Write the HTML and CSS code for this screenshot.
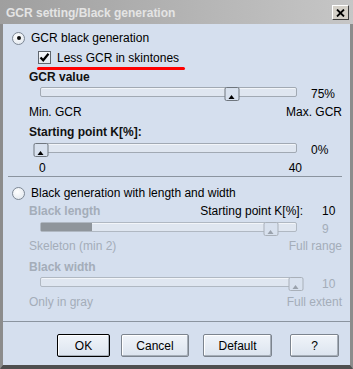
FILE: index.html
```html
<!DOCTYPE html>
<html lang="en">

<head>
  <meta charset="UTF-8">
  <meta name="viewport" content="width=device-width, initial-scale=1.0">
  <title>GCR setting/Black generation</title>
  <link rel="stylesheet" href="styles.css">
</head>

<body>
  <div class="window">
    <div class="titlebar">
      <span class="title">GCR setting/Black generation</span>
      <span class="close-btn">
        <svg width="9" height="8" viewBox="0 0 9 8">
          <path d="M1 0.5 L8 7.5 M8 0.5 L1 7.5" stroke="#000" stroke-width="1.8" fill="none" />
        </svg>
      </span>
    </div>

    <div class="dialog-body">
      <!-- GCR section -->
      <div class="option option-first">
        <span class="radio checked"></span>
        GCR black generation
      </div>
      <div class="check-row">
        <span class="checkbox">
          <svg width="11" height="11" viewBox="0 0 11 11">
            <path d="M1.5 5.5 L4.2 8.3 L9.5 1.8" stroke="#000" stroke-width="2.2" fill="none" />
          </svg>
        </span>
        Less GCR in skintones
      </div>
      <div class="red-mark"></div>

      <div class="label label-short">GCR value</div>
      <div class="slider-row">
        <div class="track">
          <span class="thumb" style="left: 75%"></span>
        </div>
        <span class="value">75%</span>
      </div>
      <div class="range-row range-row-tall">
        <span>Min. GCR</span>
        <span>Max. GCR</span>
      </div>

      <div class="label label-mid">Starting point K[%]:</div>
      <div class="slider-row">
        <div class="track">
          <span class="thumb" style="left: 0%"></span>
        </div>
        <span class="value">0%</span>
      </div>
      <div class="scale">
        <span>0</span>
        <span>40</span>
      </div>

      <div class="separator"></div>

      <!-- length and width section -->
      <div class="option option-second">
        <span class="radio"></span>
        Black generation with length and width
      </div>
      <div class="length-row">
        <span class="label-inline disabled">Black length</span>
        <span class="start-label">Starting point K[%]:</span>
        <span class="value value-narrow">10</span>
      </div>
      <div class="slider-row disabled">
        <div class="track">
          <span class="track-fill" style="width: 20%"></span>
          <span class="thumb" style="left: 90%"></span>
        </div>
        <span class="value value-narrow">9</span>
      </div>
      <div class="range-row range-row-mid disabled">
        <span>Skeleton (min 2)</span>
        <span>Full range</span>
      </div>

      <div class="label label-width disabled">Black width</div>
      <div class="slider-row disabled">
        <div class="track">
          <span class="thumb" style="left: 100%"></span>
        </div>
        <span class="value value-narrow">10</span>
      </div>
      <div class="range-row range-row-tall disabled">
        <span>Only in gray</span>
        <span>Full extent</span>
      </div>

      <div class="separator separator-full"></div>

      <div class="buttons">
        <button class="btn btn-ok">OK</button>
        <button class="btn btn-cancel">Cancel</button>
        <button class="btn btn-default">Default</button>
        <button class="btn btn-help">?</button>
      </div>
    </div>
  </div>
</body>

</html>
```

FILE: styles.css
```css
body {
  margin: 0;
  font-family: "Liberation Sans", Arial, sans-serif;
  font-size: 12px;
  color: #000;
}

.window {
  width: 353px;
  height: 369px;
  display: flex;
  flex-direction: column;
  background: #d5dfee;
  overflow: hidden;
}

.titlebar {
  flex: none;
  height: 24px;
  box-sizing: border-box;
  padding: 1px 4px 0 6px;
  display: flex;
  align-items: center;
  justify-content: space-between;
  background: linear-gradient(to right, #9f9f9f, #c6c6c6);
}

.title {
  color: #e4e4e4;
  font-weight: bold;
}

.close-btn {
  width: 17px;
  height: 15px;
  box-sizing: border-box;
  display: flex;
  align-items: center;
  justify-content: center;
  background: #d4d0c8;
  border: 1px solid;
  border-color: #fff #404040 #404040 #fff;
}

.dialog-body {
  flex: 1;
  border: 3px solid #8c8c8c;
  border-top: 0;
  border-bottom: 4px solid #4f4f4f;
}

/* radio and checkbox rows */
.option {
  display: flex;
  align-items: center;
  height: 20px;
  padding-left: 9px;
}

.option-first {
  margin-top: 4px;
}

.option-second {
  margin-top: 6px;
}

.radio {
  width: 13px;
  height: 13px;
  box-sizing: border-box;
  margin-right: 6px;
  border: 1px solid #7d8794;
  border-radius: 50%;
  background: radial-gradient(circle at 40% 35%, #fff, #dde4ec);
  display: flex;
  align-items: center;
  justify-content: center;
}

.radio.checked::after {
  content: '';
  width: 4px;
  height: 4px;
  border-radius: 50%;
  background: #111;
}

.check-row {
  display: flex;
  align-items: center;
  height: 19px;
  padding-left: 35px;
}

.checkbox {
  width: 13px;
  height: 13px;
  box-sizing: border-box;
  margin-right: 6px;
  border: 1px solid #5f666e;
  background: linear-gradient(#f6f8fb, #e4e9ef);
  display: flex;
  align-items: center;
  justify-content: center;
}

.red-mark {
  height: 3px;
  width: 148px;
  margin-left: 34px;
  border-radius: 2px;
  background: #f00;
}

/* labels */
.label {
  padding-left: 26px;
  font-weight: bold;
  color: #111;
}

.label-short {
  height: 15px;
  line-height: 15px;
}

.label-mid {
  height: 17px;
  line-height: 17px;
}

.label-width {
  height: 15px;
  line-height: 15px;
  padding-top: 3px;
}

.disabled,
.disabled .value {
  color: #a4adb9;
}

/* sliders */
.slider-row {
  display: flex;
  height: 16px;
  padding-left: 37px;
  padding-right: 8px;
}

.track {
  position: relative;
  width: 257px;
  height: 10px;
  margin-top: 2px;
  box-sizing: border-box;
  border: 1px solid #a1a9b3;
  border-radius: 2px;
  background: #dfe6f0;
  box-shadow: inset 0 1px 0 #f2f5f9;
}

.disabled .track {
  border-color: #b0b8c2;
}

.track-fill {
  display: block;
  height: 100%;
  background: #8f959b;
}

.thumb {
  position: absolute;
  top: -1px;
  width: 15px;
  height: 14px;
  box-sizing: border-box;
  transform: translateX(-50%);
  border: 1px solid #6f767e;
  border-radius: 2px;
  background: #d8e1ee;
}

.thumb::after {
  content: '';
  position: absolute;
  left: 3px;
  bottom: 1px;
  border-left: 3.5px solid transparent;
  border-right: 3.5px solid transparent;
  border-bottom: 4px solid #000;
}

.disabled .thumb {
  border-color: #a9b0b9;
}

.disabled .thumb::after {
  border-bottom-color: #9aa2ac;
}

.value {
  margin-left: auto;
  width: 31px;
  padding-top: 2px;
  line-height: 15px;
}

.value-narrow {
  width: 20px;
}

.range-row {
  display: flex;
  justify-content: space-between;
  padding: 0 8px 0 26px;
}

.range-row-tall {
  height: 23px;
  line-height: 23px;
}

.range-row-mid {
  height: 21px;
  line-height: 21px;
}

.scale {
  display: flex;
  justify-content: space-between;
  width: 263px;
  height: 15px;
  margin: 4px 0 0 36px;
  line-height: 15px;
}

.length-row {
  display: flex;
  height: 17px;
  line-height: 17px;
  padding: 0 8px 0 26px;
}

.label-inline {
  flex: 1;
  font-weight: bold;
}

.start-label {
  margin-right: 19px;
}

.length-row .value {
  padding-top: 0;
  line-height: 17px;
}

.separator {
  height: 1px;
  margin: 0 8px 0 5px;
  background: #8b949f;
}

.separator-full {
  margin: 7px 0 0 0;
}

/* buttons */
.buttons {
  display: flex;
  margin-top: 12px;
  padding-left: 54px;
}

.btn {
  height: 23px;
  box-sizing: border-box;
  padding: 0;
  font-family: inherit;
  font-size: 12px;
  color: #000;
  border: 1px solid #7c848e;
  border-radius: 2px;
  background: linear-gradient(#f0f4f9, #dce4ef);
  box-shadow: inset -1px -1px 0 #a6aeb8, inset 1px 1px 0 #fff;
}

.btn-ok {
  width: 53px;
  border-color: #000;
}

.btn-cancel {
  width: 68px;
  margin-left: 11px;
}

.btn-default {
  width: 69px;
  margin-left: 14px;
}

.btn-help {
  width: 49px;
  margin-left: 18px;
}
```
